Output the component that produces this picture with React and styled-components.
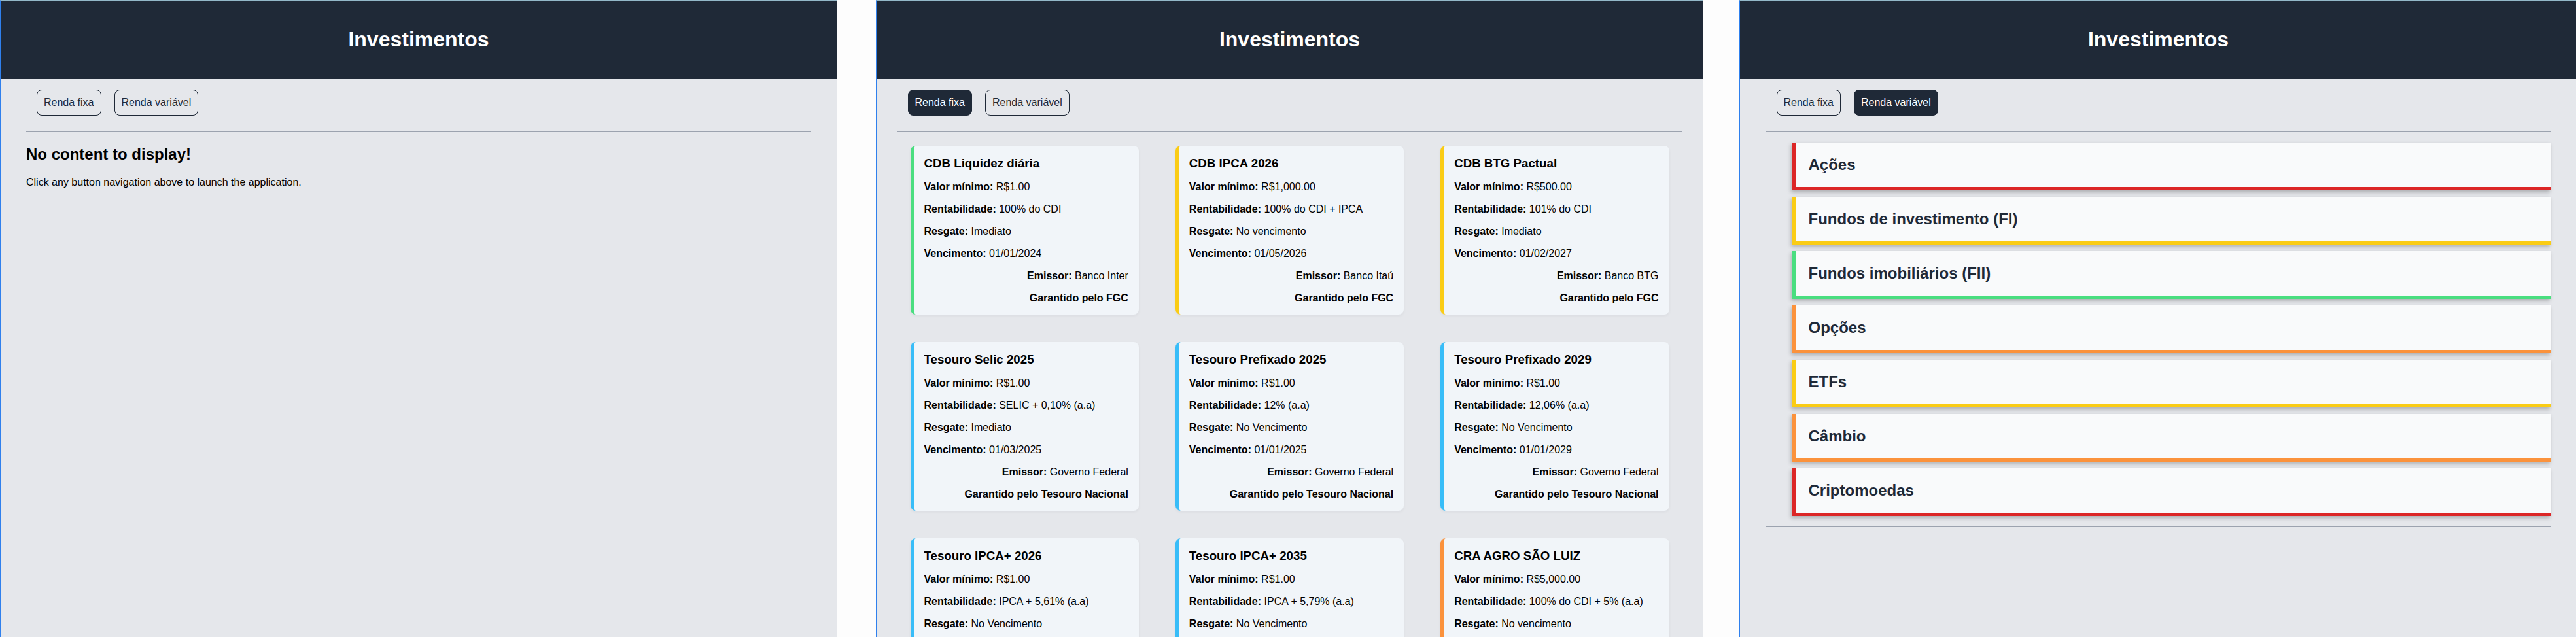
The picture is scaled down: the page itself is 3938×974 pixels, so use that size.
import React from 'react'
import styled, { createGlobalStyle } from 'styled-components'

const GlobalStyle = createGlobalStyle`
  html, body {
    margin: 0;
    padding: 0;
    background: #fdfdfd;
    overflow: hidden;
  }
  body {
    font-family: 'Liberation Sans', Arial, sans-serif;
    color: #000;
  }
`

const accents = {
  green: '#4ade80',
  yellow: '#facc15',
  blue: '#38bdf8',
  orange: '#fb923c',
  red: '#dc2626'
}

const fixedIncome = [
  { title: 'CDB Liquidez diária', min: 'R$1.00', yield: '100% do CDI', redeem: 'Imediato', due: '01/01/2024', issuer: 'Banco Inter', guarantee: 'FGC', accent: 'green' },
  { title: 'CDB IPCA 2026', min: 'R$1,000.00', yield: '100% do CDI + IPCA', redeem: 'No vencimento', due: '01/05/2026', issuer: 'Banco Itaú', guarantee: 'FGC', accent: 'yellow' },
  { title: 'CDB BTG Pactual', min: 'R$500.00', yield: '101% do CDI', redeem: 'Imediato', due: '01/02/2027', issuer: 'Banco BTG', guarantee: 'FGC', accent: 'yellow' },
  { title: 'Tesouro Selic 2025', min: 'R$1.00', yield: 'SELIC + 0,10% (a.a)', redeem: 'Imediato', due: '01/03/2025', issuer: 'Governo Federal', guarantee: 'Tesouro Nacional', accent: 'blue' },
  { title: 'Tesouro Prefixado 2025', min: 'R$1.00', yield: '12% (a.a)', redeem: 'No Vencimento', due: '01/01/2025', issuer: 'Governo Federal', guarantee: 'Tesouro Nacional', accent: 'blue' },
  { title: 'Tesouro Prefixado 2029', min: 'R$1.00', yield: '12,06% (a.a)', redeem: 'No Vencimento', due: '01/01/2029', issuer: 'Governo Federal', guarantee: 'Tesouro Nacional', accent: 'blue' },
  { title: 'Tesouro IPCA+ 2026', min: 'R$1.00', yield: 'IPCA + 5,61% (a.a)', redeem: 'No Vencimento', due: '15/08/2026', issuer: 'Governo Federal', guarantee: 'Tesouro Nacional', accent: 'blue' },
  { title: 'Tesouro IPCA+ 2035', min: 'R$1.00', yield: 'IPCA + 5,79% (a.a)', redeem: 'No Vencimento', due: '15/05/2035', issuer: 'Governo Federal', guarantee: 'Tesouro Nacional', accent: 'blue' },
  { title: 'CRA AGRO SÃO LUIZ', min: 'R$5,000.00', yield: '100% do CDI + 5% (a.a)', redeem: 'No vencimento', due: '01/06/2027', issuer: 'São Luiz Agro', guarantee: 'FGC', accent: 'orange' }
]

const variableIncome = [
  { name: 'Ações', accent: 'red' },
  { name: 'Fundos de investimento (FI)', accent: 'yellow' },
  { name: 'Fundos imobiliários (FII)', accent: 'green' },
  { name: 'Opções', accent: 'orange' },
  { name: 'ETFs', accent: 'yellow' },
  { name: 'Câmbio', accent: 'orange' },
  { name: 'Criptomoedas', accent: 'red' }
]

function Screen ({ width, spacing, tab }) {
  return (
    <Window $width={width} $spacing={spacing}>
      <Header>
        <Title>Investimentos</Title>
      </Header>
      <Main>
        <Nav>
          <NavButton $active={tab === 'fixa'}>Renda fixa</NavButton>
          <NavButton $active={tab === 'variavel'}>Renda variável</NavButton>
        </Nav>
        <Divider />
        {!tab && (
          <>
            <Empty>
              <EmptyTitle>No content to display!</EmptyTitle>
              <EmptyText>Click any button navigation above to launch the application.</EmptyText>
            </Empty>
            <Divider />
          </>
        )}
        {tab === 'fixa' && (
          <CardGrid>
            {fixedIncome.map(item => (
              <Card key={item.title} $accent={accents[item.accent]}>
                <CardTitle>{item.title}</CardTitle>
                <Line><Label>Valor mínimo:</Label> {item.min}</Line>
                <Line><Label>Rentabilidade:</Label> {item.yield}</Line>
                <Line><Label>Resgate:</Label> {item.redeem}</Line>
                <Line><Label>Vencimento:</Label> {item.due}</Line>
                <Line $right><Label>Emissor:</Label> {item.issuer}</Line>
                <Line $right><Label>Garantido pelo {item.guarantee}</Label></Line>
              </Card>
            ))}
          </CardGrid>
        )}
        {tab === 'variavel' && (
          <>
            <CategoryList>
              {variableIncome.map(item => (
                <Category key={item.name} $accent={accents[item.accent]}>{item.name}</Category>
              ))}
            </CategoryList>
            <Divider />
          </>
        )}
      </Main>
    </Window>
  )
}

export default function App () {
  return (
    <>
      <GlobalStyle />
      <Screens>
        <Screen width={1279} spacing={60} />
        <Screen width={1264} spacing={56} tab='fixa' />
        <Screen width={1280} spacing={0} tab='variavel' />
      </Screens>
    </>
  )
}

const Screens = styled.div`
  display: flex;
  align-items: stretch;
  height: 974px;
  width: 3938px;
  overflow: hidden;
`

const Window = styled.div`
  flex: none;
  width: ${p => p.$width}px;
  margin-right: ${p => p.$spacing}px;
  height: 974px;
  box-sizing: border-box;
  border-left: 1px solid #2f80ed;
  border-top: 1px solid #93b8c8;
  background: #e5e7eb;
  overflow: hidden;
`

const Header = styled.header`
  height: 120px;
  padding-bottom: 2px;
  box-sizing: border-box;
  background: #1f2937;
  display: flex;
  align-items: center;
  justify-content: center;
`

const Title = styled.h1`
  margin: 0;
  font-size: 32px;
  font-weight: bold;
  color: #fff;
`

const Main = styled.main`
  max-width: 1200px;
  margin: 0 auto;
`

const Nav = styled.nav`
  display: flex;
  gap: 20px;
  padding: 16px;
`

const NavButton = styled.button`
  font-family: 'Liberation Sans', Arial, sans-serif;
  font-size: 16px;
  line-height: 18px;
  padding: 10px;
  border: 1px solid #1f2937;
  border-radius: 8px;
  background: ${p => (p.$active ? '#1f2937' : 'transparent')};
  color: ${p => (p.$active ? '#fff' : '#1f2937')};
  cursor: pointer;
`

const Divider = styled.hr`
  margin: 8px 0 0;
  border: 0;
  border-top: 1px solid #9ca3af;
`

const Empty = styled.div``

const EmptyTitle = styled.h2`
  font-size: 24px;
  margin: 20px 0;
`

const EmptyText = styled.p`
  font-size: 16px;
  margin: 16px 0;
`

const CardGrid = styled.section`
  display: grid;
  grid-template-columns: repeat(3, 1fr);
  column-gap: 56px;
  row-gap: 42px;
  padding: 0 20px;
  margin-top: 21px;
`

const Card = styled.article`
  background: #f1f5f9;
  border-left: 5px solid ${p => p.$accent};
  border-radius: 8px;
  padding: 16px 16px 16px;
  box-shadow: 0 2px 4px rgba(15, 23, 42, 0.05);
`

const CardTitle = styled.h3`
  margin: 0;
  font-size: 18.72px;
`

const Line = styled.p`
  margin: 16px 0 0;
  font-size: 16px;
  text-align: ${p => (p.$right ? 'right' : 'left')};
`

const Label = styled.strong`
  font-weight: bold;
`

const CategoryList = styled.ul`
  list-style: none;
  margin: 16px 0;
  padding-left: 40px;
  display: flex;
  flex-direction: column;
  gap: 10px;
`

const Category = styled.li`
  background: #f9fafb;
  border-left: 5px solid ${p => p.$accent};
  border-bottom: 5px solid ${p => p.$accent};
  padding: 20px;
  font-size: 24px;
  font-weight: bold;
  color: #1f2937;
  box-shadow: -2px 3px 6px rgba(0, 0, 0, 0.25);
`
